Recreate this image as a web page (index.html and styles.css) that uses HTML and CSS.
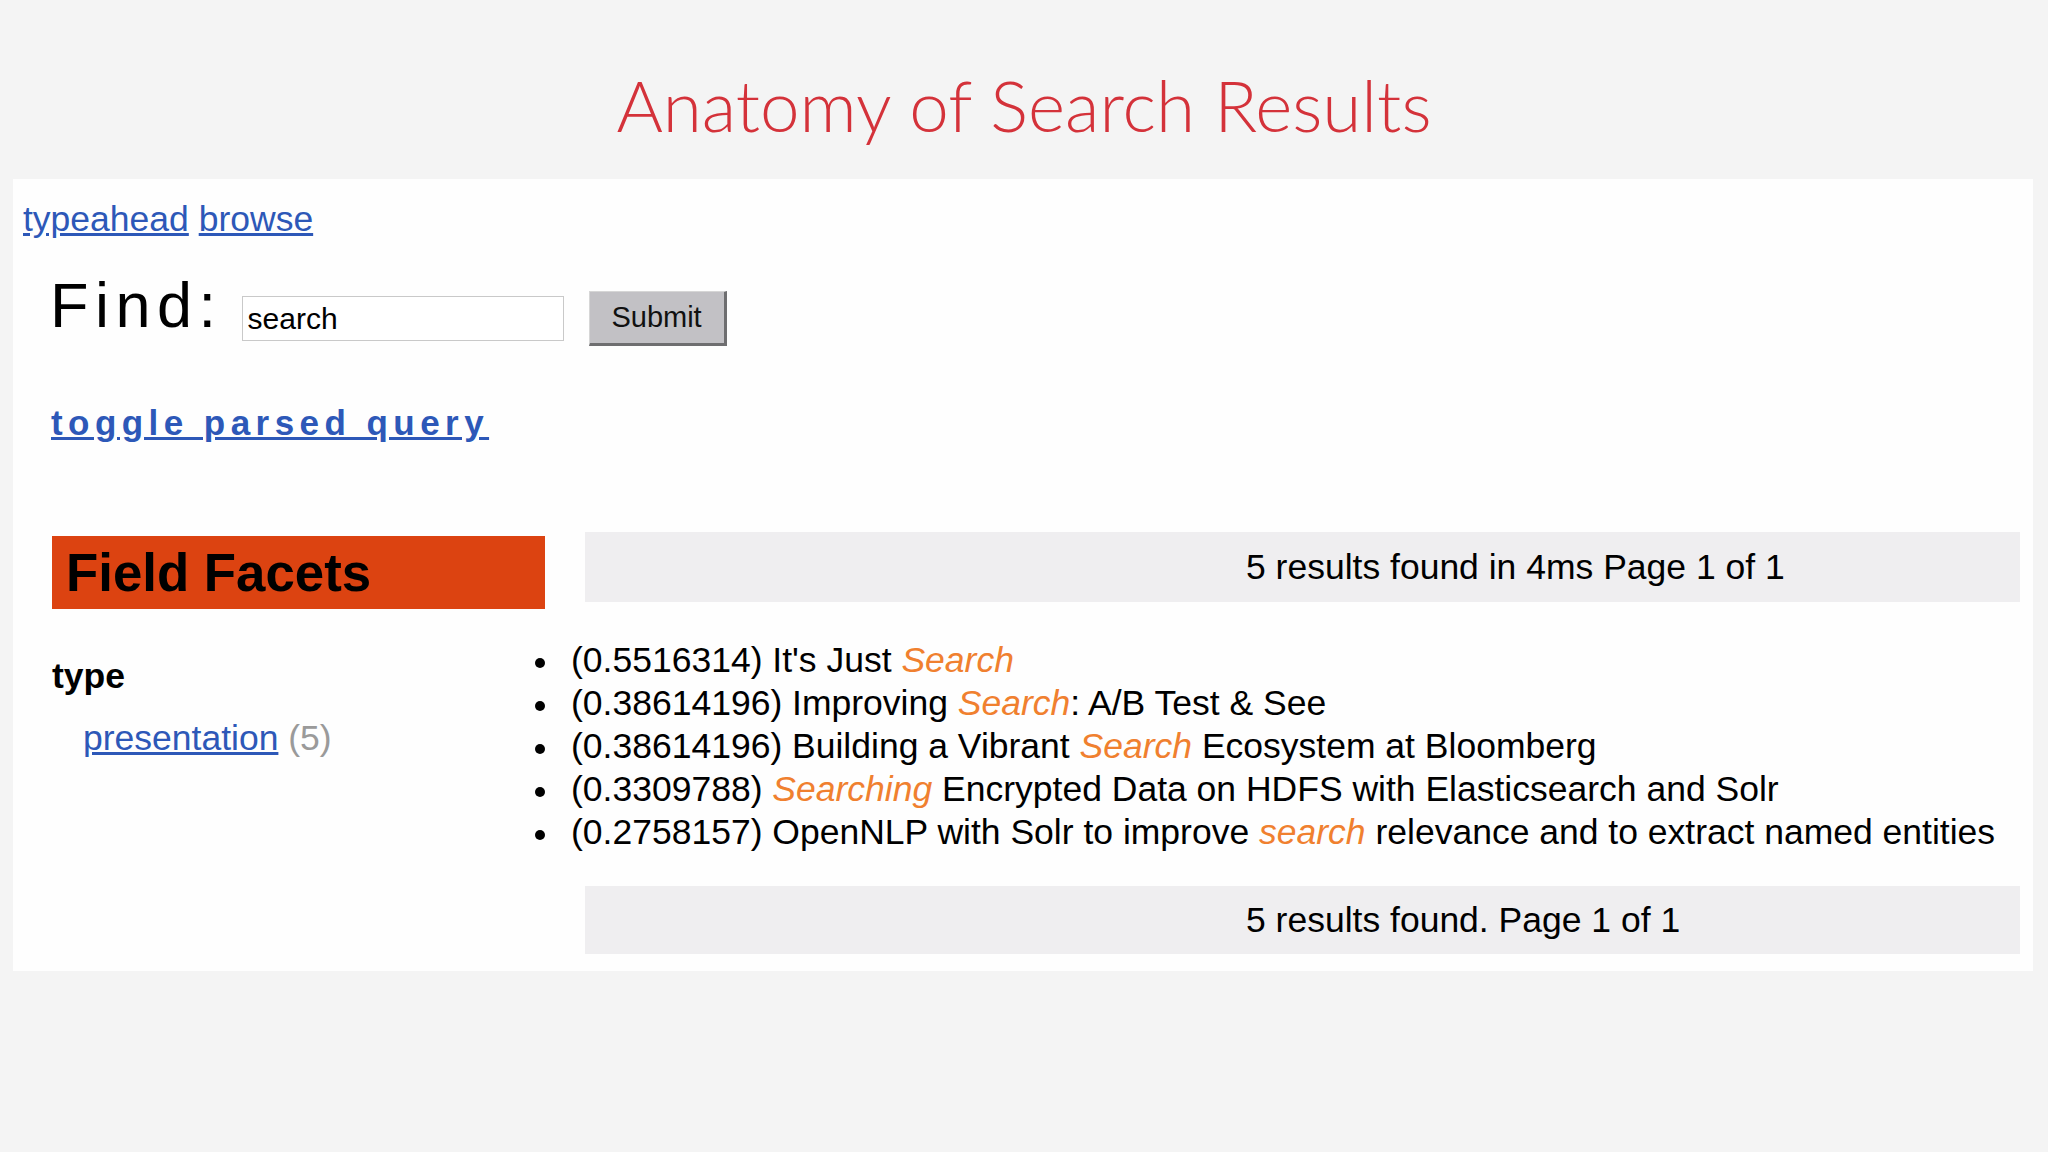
FILE: index.html
```html
<!DOCTYPE html>
<html>
<head>
<meta charset="utf-8">
<link rel="stylesheet" href="styles.css">
</head>
<body>
<h1 class="title">Anatomy of Search Results</h1>
<div class="panel">
  <div class="nav"><a href="#">typeahead</a> <a href="#">browse</a></div>
  <form class="find-row">
    <span class="find-label">Find:</span>
    <input class="find-input" type="text" value="search">
    <button class="find-btn" type="button">Submit</button>
  </form>
  <div class="toggle"><a href="#">toggle parsed query</a></div>
  <div class="columns">
    <div class="facets">
      <h2 class="facets-head">Field Facets</h2>
      <div class="facet-name">type</div>
      <div class="facet-value"><a href="#">presentation</a> <span class="count">(5)</span></div>
    </div>
    <div class="results">
      <div class="bar">5 results found in 4ms Page 1 of 1</div>
      <ul class="result-list">
        <li>(0.5516314) It's Just <em class="hl">Search</em></li>
        <li>(0.38614196) Improving <em class="hl">Search</em>: A/B Test &amp; See</li>
        <li>(0.38614196) Building a Vibrant <em class="hl">Search</em> Ecosystem at Bloomberg</li>
        <li>(0.3309788) <em class="hl">Searching</em> Encrypted Data on HDFS with Elasticsearch and Solr</li>
        <li>(0.2758157) OpenNLP with Solr to improve <em class="hl">search</em> relevance and to extract named entities</li>
      </ul>
      <div class="bar bar-bottom">5 results found. Page 1 of 1</div>
    </div>
  </div>
</div>
</body>
</html>
```
FILE: styles.css
```css
html, body {
  margin: 0;
  padding: 0;
}
body {
  background: #f4f4f4;
  font-family: "Liberation Sans", Arial, sans-serif;
  font-size: 35.5px;
  color: #000;
  width: 2048px;
  height: 1152px;
  overflow: hidden;
}
a {
  color: #2d58b8;
  text-decoration: underline;
}
.title {
  margin: 0;
  box-sizing: content-box;
  padding-top: 69px;
  height: 110px;
  font-family: "Lato", "Open Sans", sans-serif;
  font-weight: 300;
  font-size: 71px;
  line-height: 71px;
  color: #d4323a;
  text-align: center;
}
.panel {
  background: #fefefe;
  margin: 0 15px 0 13px;
  padding: 20px 13px 17px 10px;
}
.nav {
  line-height: 40px;
  height: 40px;
  font-size: 35.5px;
}
.find-row {
  margin: 35px 0 0 27px;
  display: flex;
  align-items: center;
  height: 89px;
}
.find-label {
  font-size: 63px;
  line-height: 63px;
  letter-spacing: 6.5px;
  margin-bottom: 26px;
}
.find-input {
  box-sizing: border-box;
  width: 322px;
  height: 45px;
  margin-left: 19px;
  border: 1px solid #c9c9c9;
  padding: 0 5px;
  font-family: "Liberation Sans", Arial, sans-serif;
  font-size: 30px;
  color: #000;
  background: #fff;
  outline: none;
}
.find-btn {
  box-sizing: border-box;
  width: 138px;
  height: 55px;
  margin-left: 25px;
  background: #c2c1c5;
  border: 1px solid #d6d6d6;
  border-right: 3px solid #6e6e70;
  border-bottom: 3px solid #6e6e70;
  font-family: "Liberation Sans", Arial, sans-serif;
  font-size: 29px;
  color: #111;
  padding: 0;
}
.toggle {
  margin: 40px 0 0 28px;
  line-height: 40px;
  font-size: 35px;
  font-weight: bold;
  letter-spacing: 5.45px;
}
.columns {
  display: grid;
  grid-template-columns: 493px 1fr;
  column-gap: 40px;
  margin: 89px 0 0 29px;
}
.facets-head {
  margin: 4px 0 0 0;
  background: #dc4311;
  height: 73px;
  line-height: 73px;
  padding: 0 14px;
  font-size: 52.8px;
  font-weight: bold;
}
.facet-name {
  margin-top: 47px;
  font-weight: bold;
  line-height: 40px;
}
.facet-value {
  margin: 22px 0 0 31px;
  line-height: 40px;
}
.count {
  color: #9a9a9a;
}
.bar {
  background: #efeef0;
  height: 70px;
  line-height: 70px;
  padding-left: 661px;
  white-space: nowrap;
}
.bar-bottom {
  height: 68px;
  line-height: 68px;
}
.result-list {
  margin: 37px 0 32px -14px;
  padding: 0;
  list-style: none;
  line-height: 43px;
  white-space: nowrap;
}
.result-list li::before {
  content: "";
  display: inline-block;
  width: 10px;
  height: 10px;
  border-radius: 50%;
  background: #000;
  margin-left: -36px;
  margin-right: 26px;
  vertical-align: middle;
}
.hl {
  color: #f0802f;
  font-style: italic;
}
```
